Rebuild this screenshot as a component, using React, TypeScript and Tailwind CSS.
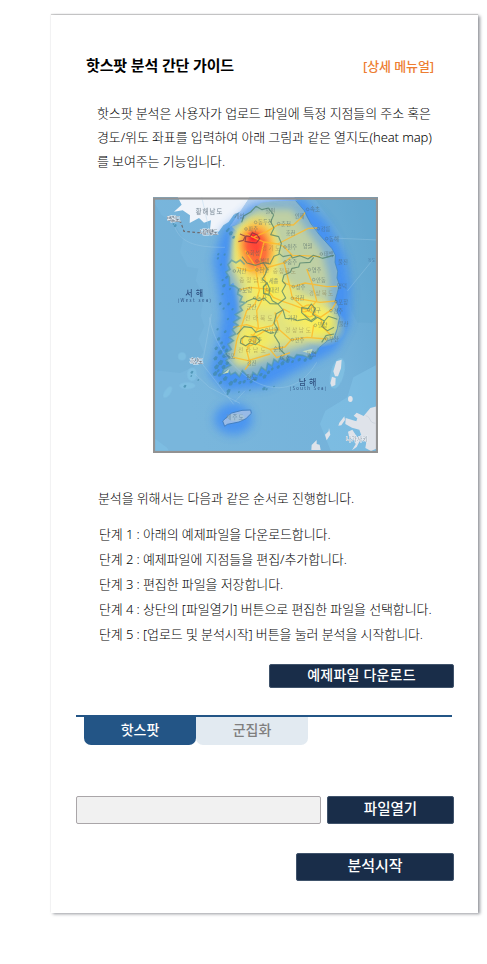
import React from "react";

type Label = { x: number; y: number; t: string };

const cities: Label[] = [
  { x: 473, y: 46, t: "속초" }, { x: 505, y: 104, t: "강릉" }, { x: 530, y: 134, t: "동해" },
  { x: 386, y: 89, t: "춘천" }, { x: 317, y: 85, t: "동두천" }, { x: 288, y: 105, t: "파주" },
  { x: 405, y: 159, t: "원주" }, { x: 405, y: 204, t: "충주" }, { x: 478, y: 227, t: "영주" },
  { x: 491, y: 257, t: "안동" }, { x: 430, y: 278, t: "상주" }, { x: 427, y: 313, t: "김천" },
  { x: 476, y: 347, t: "대구" }, { x: 543, y: 350, t: "경주" }, { x: 558, y: 323, t: "포항" },
  { x: 530, y: 435, t: "부산" }, { x: 427, y: 437, t: "진주" }, { x: 350, y: 407, t: "남원" },
  { x: 293, y: 177, t: "화성" }, { x: 253, y: 231, t: "서산" }, { x: 270, y: 288, t: "보령" },
  { x: 352, y: 287, t: "대전" }, { x: 321, y: 228, t: "천안" }, { x: 321, y: 201, t: "평택" },
  { x: 514, y: 180, t: "태백" }, { x: 300, y: 439, t: "광주" }, { x: 314, y: 312, t: "논산" },
  { x: 496, y: 394, t: "밀양" },
];

const towns: Label[] = [
  { x: 253, y: 66, t: "개성" }, { x: 346, y: 52, t: "철원" }, { x: 434, y: 66, t: "인제" },
  { x: 407, y: 116, t: "홍천" }, { x: 458, y: 155, t: "영월" }, { x: 564, y: 203, t: "울진" },
  { x: 561, y: 277, t: "영덕" }, { x: 566, y: 389, t: "울산" }, { x: 356, y: 260, t: "세종" },
  { x: 290, y: 338, t: "군산" }, { x: 226, y: 487, t: "목포" }, { x: 289, y: 550, t: "완도" },
  { x: 370, y: 464, t: "순천" }, { x: 470, y: 480, t: "통영" }, { x: 290, y: 508, t: "강진" },
  { x: 413, y: 372, t: "거창" }, { x: 390, y: 493, t: "여수" },
];

const provinces: (Label & { w: number })[] = [
  { x: 335, y: 163, t: "경기도", w: 56 }, { x: 268, y: 261, t: "충청남도", w: 78 },
  { x: 368, y: 234, t: "충청북도", w: 70 }, { x: 476, y: 298, t: "경상북도", w: 74 },
  { x: 286, y: 373, t: "전라북도", w: 82 }, { x: 265, y: 471, t: "전라남도", w: 82 },
  { x: 405, y: 411, t: "경상남도", w: 78 },
];

const land =
  "M245 98 L272 88 L290 64 L312 42 L334 26 L370 22 L437 20 L450 34 L463 50 L470 68 L482 88 L496 102 L508 122 L525 142 L546 164 L556 184 L555 205 L563 232 L561 252 L568 272 L562 296 L556 318 L566 338 L561 352 L569 370 L562 386 L562 404 L552 420 L552 434 L533 440 L518 454 L506 462 L498 477 L482 474 L475 491 L458 484 L440 482 L432 493 L415 486 L407 500 L392 489 L384 505 L372 496 L366 516 L353 508 L348 530 L334 520 L322 544 L309 535 L300 555 L287 540 L277 530 L268 548 L256 535 L242 542 L235 528 L216 540 L221 526 L242 514 L228 500 L240 490 L226 478 L244 466 L234 451 L250 440 L238 430 L257 420 L247 407 L264 394 L251 384 L270 372 L256 362 L277 349 L270 338 L286 326 L270 323 L276 308 L263 300 L266 285 L255 277 L250 266 L239 274 L238 250 L228 234 L240 226 L234 212 L245 199 L258 206 L271 198 L284 211 L291 202 L278 190 L274 176 L263 166 L270 151 L260 141 L268 126 L262 113 Z";

const islets: [number, number, number][] = [
  [205, 181, 4], [224, 182, 4], [204, 193, 4], [213, 212, 4], [230, 250, 5], [218, 258, 4], [222, 275, 6],
  [240, 285, 4], [218, 300, 4], [211, 329, 5], [221, 344, 4], [236, 330, 5], [248, 346, 4],
  [234, 375, 4], [203, 406, 4], [206, 435, 6], [215, 447, 5], [226, 413, 5], [199, 463, 6],
  [211, 475, 8], [223, 486, 7], [197, 493, 7], [212, 506, 9], [200, 519, 8], [221, 519, 7],
  [196, 539, 8], [209, 543, 6], [226, 554, 8], [212, 566, 6], [243, 568, 8], [256, 560, 7],
  [270, 566, 6], [283, 563, 6], [236, 591, 7], [233, 600, 4], [267, 594, 3], [300, 589, 3],
  [342, 584, 6], [350, 586, 4], [372, 578, 3], [304, 563, 6], [317, 555, 7], [333, 542, 6],
  [344, 548, 7], [356, 535, 6], [367, 525, 5], [385, 519, 6], [398, 508, 7], [414, 501, 7],
  [428, 503, 5], [448, 497, 6], [466, 498, 6], [483, 491, 7], [126, 535, 5], [124, 546, 3],
  [105, 577, 5], [145, 558, 3], [76, 95, 5], [71, 90, 3], [232, 110, 5], [243, 118, 7], [251, 130, 5],
  [236, 105, 4], [221, 460, 6], [230, 469, 6], [232, 508, 6], [229, 536, 6], [205, 530, 5],
];

function KoreaHeatMap() {
  return (
    <svg
      viewBox="153 197 225 256"
      className="block h-[256px] w-[225px] font-['Noto_Sans_CJK_KR',sans-serif]"
      role="img"
    >
      <defs>
        <linearGradient id="sea" x1="0" x2="1" y1="0.35" y2="0">
          <stop offset="0" stopColor="#79b6dc" />
          <stop offset="0.65" stopColor="#74b2da" />
          <stop offset="1" stopColor="#62a6ce" />
        </linearGradient>
        <radialGradient id="red">
          <stop offset="0" stopColor="#ff3838" />
          <stop offset="0.4" stopColor="#ff5536" stopOpacity="0.88" />
          <stop offset="0.68" stopColor="#ff9c34" stopOpacity="0.55" />
          <stop offset="1" stopColor="#ffe84c" stopOpacity="0" />
        </radialGradient>
        <radialGradient id="core">
          <stop offset="0" stopColor="#f4042c" />
          <stop offset="1" stopColor="#ff3030" stopOpacity="0" />
        </radialGradient>
        <radialGradient id="yellow">
          <stop offset="0" stopColor="#fff03a" stopOpacity="0.85" />
          <stop offset="0.55" stopColor="#fbee5c" stopOpacity="0.6" />
          <stop offset="1" stopColor="#f5ee70" stopOpacity="0" />
        </radialGradient>
        <filter id="soft" x="-30%" y="-30%" width="160%" height="160%"><feGaussianBlur stdDeviation="15" /></filter>
        <filter id="light" x="-30%" y="-30%" width="160%" height="160%"><feGaussianBlur stdDeviation="11" /></filter>
        <clipPath id="frame"><rect x="9" y="9" width="675" height="768" /></clipPath>
      </defs>
      <g transform="translate(150 194) scale(0.33333)" clipPath="url(#frame)">
        <rect x="9" y="9" width="675" height="768" fill="url(#sea)" />
        <path d="M9 20 L35 64 L68 84 L100 132 L90 174 L112 218 L145 224 L137 260 L162 305 L152 365 L163 396 L145 435 L160 474 L132 519 L90 537 L9 528 Z" fill="#72afd5" opacity="0.6" />
        <path d="M684 510 L610 550 L592 610 L526 650 L510 690 L530 740 L545 777 H684 Z M9 730 L52 762 L60 777 H9 Z" fill="#82c3e7" opacity="0.55" />
        <path d="M490 9 H684 V388 L622 385 L604 350 L580 130 Z" fill="#5ba2cc" opacity="0.25" />
        <g fill="#86c6e7" opacity="0.6">
          <ellipse cx="96" cy="487" rx="12" ry="12" /><ellipse cx="126" cy="541" rx="15" ry="20" />
          <ellipse cx="53" cy="594" rx="9" ry="20" transform="rotate(35 53 594)" /><ellipse cx="112" cy="575" rx="24" ry="10" />
          <ellipse cx="562" cy="538" rx="20" ry="47" transform="rotate(15 562 538)" />
        </g>
        <path d="M83 9 L95 32 L72 53 L98 49 L120 64 L119 87 L147 72 L162 86 L183 79 L180 106 L206 113 L220 94 L236 84 L251 62 L273 52 L300 9 Z" fill="#f0f4fa" />
        <path d="M300 9 H433 L451 38 L420 40 L370 25 L318 40 L290 65 L270 88 L239 98 Z" fill="#b9d3ee" />

        <path d="M315 50 L450 30 L520 100 L568 195 L584 285 L580 385 L545 455 L440 510 L345 560 L232 573 L197 533 L220 455 L235 365 L223 280 L208 200 L234 120 Z" fill="#438ff4" stroke="#438ff4" strokeWidth="36" opacity="0.9" filter="url(#soft)" />
        <ellipse cx="250" cy="675" rx="57" ry="47" fill="#438ff4" opacity="0.85" filter="url(#soft)" />

        <path d={land} fill="#8eb7c8" opacity="0.85" />
        <path d="M322 45 L425 45 L470 107 L515 170 L535 245 L540 330 L544 390 L515 440 L440 465 L350 500 L262 522 L240 490 L260 430 L274 345 L260 275 L242 218 L258 105 Z" fill="#c4d2a0" opacity="0.92" filter="url(#light)" />
        <path d="M300 80 L355 90 L382 165 L390 245 L470 305 L536 355 L536 410 L455 443 L360 455 L300 510 L255 506 L278 380 L278 275 L248 209 L252 115 Z" fill="#e8e678" opacity="0.88" filter="url(#light)" />
        <ellipse cx="320" cy="167" rx="82" ry="118" fill="url(#yellow)" />
        <ellipse cx="355" cy="290" rx="75" ry="75" fill="url(#yellow)" />
        <ellipse cx="475" cy="360" rx="90" ry="60" fill="url(#yellow)" />
        <ellipse cx="517" cy="398" rx="72" ry="62" fill="url(#yellow)" />
        <ellipse cx="315" cy="430" rx="80" ry="65" fill="url(#yellow)" opacity="0.8" />
        <ellipse cx="320" cy="165" rx="70" ry="105" fill="url(#red)" />
        <ellipse cx="309" cy="145" rx="60" ry="60" fill="url(#red)" opacity="0.5" />
        <ellipse cx="310" cy="130" rx="24" ry="22" fill="url(#core)" />

        <g fill="none" stroke="#ffb928" strokeWidth="4" opacity="0.82" strokeLinejoin="round">
          <path d="M285 118 L310 130 L342 144 L383 150 L430 126 L475 103 L502 102 M310 130 L350 113 L385 92 L430 93 L453 72 L466 55 M342 144 L330 195 L343 245 L350 285 L370 310 L400 323 L427 332 L474 350 M383 150 L402 158 L428 185 L460 185 L510 188" />
          <path d="M260 220 L300 231 L340 224 L400 207 L428 185 M270 287 L300 280 L350 285 M285 170 L315 215 L328 290 L315 330 L290 350 L260 440 L252 485 M350 285 L337 315 L320 350 L325 400 L302 438 M402 207 L412 245 L427 311 L460 340" />
          <path d="M470 225 L485 264 L500 320 L476 350 M400 265 L430 278 L465 267 L530 278 L561 277 M427 311 L510 325 L557 321 M474 350 L511 370 L545 347 L560 323 M302 438 L345 410 L388 407 L423 438 L470 430 L530 435 M423 438 L405 459 L360 466 L320 450 L302 438" />
          <path d="M250 400 L290 392 L325 404 L367 395 L400 345 L420 355 M388 407 L375 355 M474 350 C442 366 456 326 484 334 C506 348 487 384 464 361 M295 430 C275 415 265 460 296 456 C320 452 326 426 302 422 M250 490 L294 500 L360 480 M302 438 L290 470 L300 507 L285 527 M511 370 L521 402 L544 425 M491 394 L485 431 M360 466 L380 491 L420 476" />
        </g>
        <g fill="none" stroke="#4c8069" strokeWidth="3.4" opacity="0.72" strokeLinejoin="round">
          <path d="M275 85 L281 66 L302 54 L318 37 L336 47 L355 42 L371 63 L362 83 L372 102 L362 122 L386 128 L394 148 L387 178 L399 188 L422 183 L427 192 L450 185 L474 195 L490 184 L517 193 L552 184" />
          <path d="M276 188 L291 207 L317 214 L340 206 L360 210 L372 187 L388 181 M491 190 L480 205 L450 207 L446 219 L426 223 L421 235 L402 243 L397 261 L407 272 L396 292 L407 312 L384 330 L399 348 L406 373 L433 375 L442 380" />
          <path d="M288 323 L313 313 L326 320 L343 313 L360 329 L384 330 M340 206 L352 225 L346 241 L337 255 L352 268 L340 278 L341 298 L360 305 L367 320 L384 330" />
          <path d="M442 380 L467 375 L485 383 L502 370 L523 381 L535 367 L562 376 M399 348 L379 359 L372 387 L383 405 L373 425 L388 449 L388 464 L404 480 M261 421 L282 398 L305 401 L318 415 L338 407 L361 418 L373 416" />
          <path d="M273 435 L284 426 L300 429 L317 427 L330 440 L317 452 L299 447 L287 455 L271 447 Z M455 356 L455 341 L474 344 L484 330 L496 344 L488 361 L499 369 L482 380 L466 366 Z M341 278 L351 266 L359 284 L357 301 L341 299 Z M523 381 L516 398 L532 410 L552 400 M515 445 L528 425 L552 420" />
          <path d="M285 142 L288 126 L301 127 L307 116 L322 123 L329 134 L319 147 L302 145 Z M270 120 L286 127 L280 139 L265 143" stroke="#792e43" />
        </g>
        <path d="M437 20 L463 50 L482 88 L508 122 L546 164 L556 184 L555 205 L563 232 L561 252 L568 272 L562 296 L556 318 L566 338 L561 352 L569 370 L562 404 L552 434 L533 440 L506 462" fill="none" stroke="#4285bb" strokeWidth="3" opacity="0.7" />
        <path d="M506 462 L498 477 L482 474 L475 491 L458 484 L440 482 L432 493 L415 486 L407 500 L392 489 L384 505 L372 496 L366 516 L353 508 L348 530 L334 520 L322 544 L309 535 L300 555 L287 540 L277 530 L268 548 L256 535 L242 542 L235 528 L216 540 L221 526 L242 514 L228 500 L240 490 L226 478 L244 466 L234 451 L250 440 L238 430 L257 420 L247 407 L264 394 L251 384 L270 372 L256 362 L277 349 L270 338 L286 326 L270 323 L276 308 L263 300 L266 285 L255 277 L239 274 L238 250 L228 234 L240 226 L234 212 L245 199 L258 206 L271 198 L284 211" fill="none" stroke="#5297a4" strokeWidth="5" opacity="0.65" />
        <g fill="#4089a8" opacity="0.7">
          {islets.map(([x, y, r], i) => (
            <path key={i} d={`M${x - r} ${y} l${r} ${-r} l${r * 0.9} ${r * 0.4} l${-r * 0.5} ${r * 1.3} l${-r} ${r * 0.2} Z`} />
          ))}
        </g>
        <path d="M218 540 L238 524 L235 536 Z M457 472 L488 464 L482 480 Z" fill="#c5dbc0" />
        <path d="M218 681 L231 669 L245 657 L276 649 L302 648 L304 658 L288 674 L267 684 L232 691 L224 697 Z" fill="#98bae6" stroke="#4380c0" strokeWidth="3" />
        <ellipse cx="258" cy="670" rx="26" ry="11" fill="#a8c4d6" opacity="0.8" />
        <g fill="none" stroke="#a5cee9" strokeWidth="2" opacity="0.5">
          <path d="M74 99 C95 152 148 160 225 160 M155 9 L179 114 M546 132 L684 138 M668 198 L592 291 M178 370 C205 530 400 675 500 505 M270 628 L178 580 L135 540 M254 624 L285 590 M184 360 L157 510 L251 631" />
        </g>
        <path d="M73 77 L92 84 L102 112 L145 116 L198 114" fill="none" stroke="#6c6b70" strokeWidth="3.5" strokeDasharray="8 7" />
        <g fill="#dfe3ea">
          <path d="M559 502 L575 497 L573 523 L564 547 L555 547 L550 532 Z M546 548 L557 552 L556 573 L545 578 L541 568 Z" />
          <ellipse cx="601" cy="615" rx="7" ry="9" />
          <path d="M583 667 L568 686 L565 695 L574 694 L585 678 Z M537 702 L536 712 L525 722 L530 739 L541 722 Z M500 738 L485 753 L484 768 H512 L509 752 L500 750 Z" />
          <path d="M684 636 L661 642 L641 666 L620 656 L611 665 L622 673 L619 682 L587 672 L586 690 L606 701 L628 707 L634 724 L622 730 L607 707 L594 713 L598 732 L613 738 L617 751 L606 769 L620 759 L631 737 L649 744 L646 762 L663 771 L684 762 Z" />
        </g>
        <path d="M647 665 C666 670 654 685 676 688" fill="none" stroke="#c6cfd9" strokeWidth="2" />

        <g fill="#4e6568" fontSize="16" opacity="0.6">
          {cities.map((c, i) => (
            <g key={i}>
              <circle cx={c.x} cy={c.y} r="4" fill="none" stroke="#4e6568" strokeWidth="2" />
              <text x={c.x + 7} y={c.y + 6}>{c.t}</text>
            </g>
          ))}
          {towns.map((c, i) => (
            <text key={i} x={c.x} y={c.y + 6}>{c.t}</text>
          ))}
        </g>
        <g fill="#806f40" fontSize="17" opacity="0.45">
          {provinces.map((p, i) => (
            <text key={i} x={p.x} y={p.y + 4} textLength={p.w}>{p.t}</text>
          ))}
        </g>
        <g fill="#2f5181">
          <text x="106" y="307" fontSize="24" fontWeight="500" textLength="53">서해</text>
          <text x="83" y="325" fontSize="13" textLength="100">(West sea)</text>
          <text x="446" y="573" fontSize="24" fontWeight="500" textLength="53">남해</text>
          <text x="419" y="589" fontSize="13" textLength="110">(South Sea)</text>
        </g>
        <g fill="#526171" stroke="#e5edf4" strokeWidth="3" paintOrder="stroke" fontSize="17">
          <text x="137" y="60" fontSize="19" textLength="80" fill="#7d8995">황해남도</text>
          <text x="51" y="80" textLength="40">백령도</text>
          <text x="150" y="120" textLength="54">대연평도</text>
          <text x="119" y="507" textLength="40">흑산도</text>
          <text x="588" y="742" textLength="65" fill="#9ba3ad">나가사키</text>
        </g>
        <text x="228" y="675" fontSize="17" textLength="53" fill="#6d8fad">제주도</text>
        <text x="654" y="203" fontSize="12" fill="#4d7faa">독도</text>
      </g>
      <rect x="154" y="198.5" width="223" height="253.5" fill="none" stroke="#929292" strokeWidth="2.2" />
    </svg>
  );
}

const steps = [
  "아래의 예제파일을 다운로드합니다.",
  "예제파일에 지점들을 편집/추가합니다.",
  "편집한 파일을 저장합니다.",
  "상단의 [파일열기] 버튼으로 편집한 파일을 선택합니다.",
  "[업로드 및 분석시작] 버튼을 눌러 분석을 시작합니다.",
];

const button = "flex items-center justify-center rounded-[2px] border border-[#40536b] bg-[#192d49] pb-[3px] font-medium text-white";

export default function App() {
  return (
    <div className="h-[964px] w-[487px] overflow-hidden bg-white pl-[51px] pt-[15px] font-['Noto_Sans','Noto_Sans_CJK_KR',sans-serif] text-black">
      <main className="h-[898px] w-[427px] bg-white shadow-[2px_1px_3px_0px_rgba(80,85,95,0.6),0_-1px_1px_rgba(0,0,0,0.18)]">
        <header className="flex h-[86px] items-start justify-between pl-[35px] pr-[44px] pt-[38px]">
          <h1 className="whitespace-nowrap text-[15px] font-bold leading-6 tracking-[-0.13px] text-black">핫스팟 분석 간단 가이드</h1>
          <a className="whitespace-nowrap pt-px text-[13px] font-medium leading-6 tracking-[-0.1px] text-[#ed7d31]">[상세 메뉴얼]</a>
        </header>
        <p className="ml-[46px] whitespace-nowrap text-[13px] font-light leading-6 tracking-[-0.12px]">
          핫스팟 분석은 사용자가 업로드 파일에 특정 지점들의 주소 혹은<br />
          경도/위도 좌표를 입력하여 아래 그림과 같은 열지도(heat map)<br />
          를 보여주는 기능입니다.
        </p>
        <div className="ml-[102px] mt-[24px]"><KoreaHeatMap /></div>
        <p className="ml-[47px] mt-[33px] whitespace-nowrap text-[13px] font-light leading-6 tracking-[-0.12px]">
          분석을 위해서는 다음과 같은 순서로 진행합니다.
        </p>
        <ol className="ml-[48px] mt-[12px] whitespace-nowrap text-[13px] font-light leading-[25px] tracking-[-0.1px]">
          {steps.map((text, i) => (
            <li key={i}>단계 {i + 1} : {text}</li>
          ))}
        </ol>
        <button className={`${button} ml-[218px] mt-[17px] h-[24px] w-[185px] text-[14px] tracking-[0.2px]`}>예제파일 다운로드</button>
        <section className="ml-[25px] mt-[27px] w-[376px]">
          <div className="h-[2px] bg-[#235586]" />
          <div className="flex pl-[8px] text-[14px] font-medium leading-[26px]">
            <button className="h-[28px] w-[112px] rounded-b-[7px] bg-[#235586] pb-[2px] text-white">핫스팟</button>
            <button className="h-[28px] w-[112px] rounded-b-[7px] bg-[#e2eaf1] pb-[2px] text-[#7f7f7f]">군집화</button>
          </div>
        </section>
        <div className="ml-[25px] mt-[51px] flex gap-[6px]">
          <input className="h-[28px] w-[245px] rounded-[2px] border border-[#aaa6a9] bg-[#f1f1f1]" />
          <button className={`${button} h-[28px] w-[127px] text-[14.5px]`}>파일열기</button>
        </div>
        <button className={`${button} ml-[245px] mt-[29px] h-[28px] w-[158px] text-[15px]`}>분석시작</button>
      </main>
    </div>
  );
}
